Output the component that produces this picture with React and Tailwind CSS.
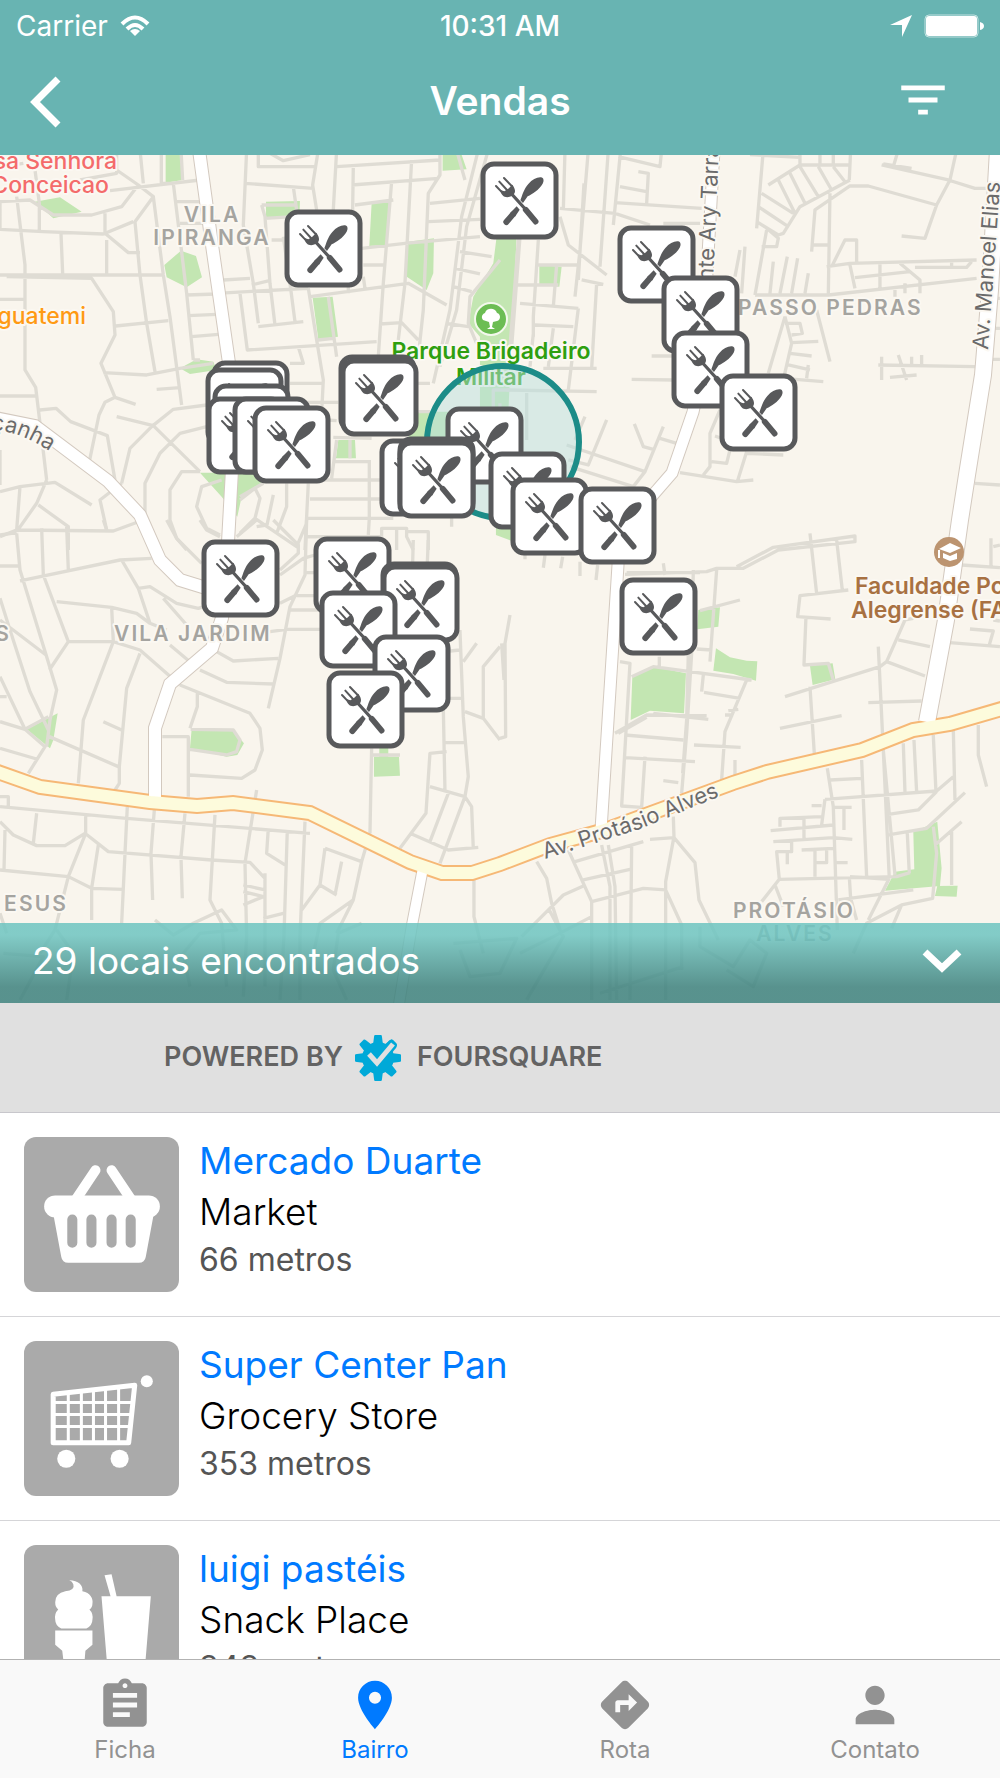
import { MdAssignment, MdDirections, MdFilterList, MdPerson, MdPlace } from 'react-icons/md';

// Map geometry. Every tile has its own grid, three units to one map unit.
const TILES = [
  {
    key: 'nw',
    transform: 'translate(0 150) scale(0.3333)',
    parks: [
      'M497,0H543L548,90L497,98Z',
      'M105,155L180,142L245,185L160,205Z',
      'M798,155L900,153L898,203H798Z',
      'M1115,160L1172,150L1162,285L1108,288Z',
      'M1225,275L1302,265L1300,370L1280,420L1217,378Z',
      'M493,345L543,302L588,318L606,382L560,412L500,382Z',
      'M938,443L998,440L1014,560L955,568Z',
      'M540,655L590,628L640,635L650,660L570,672Z',
      'M1328,0H1380L1400,58L1328,62Z',
      'M1490,260H1550L1532,640L1525,790H1440V560L1405,520L1420,440L1480,340Z',
      'M1255,785H1530L1500,870L1225,862Z',
      'M1015,870H1065L1068,925H1008Z',
      'M600,968H780L790,1000L725,1040L712,1100L665,1040Z',
      'M1488,1120L1550,1130L1540,1175L1488,1155Z',
    ],
    streets: [
      'M0,155L90,150L160,195L275,195L365,170L415,105M0,238L130,245L310,252L400,215',
      'M0,50L70,40M105,60L118,160V240M183,250L188,370M315,190V250L385,308H420M320,270V370',
      'M50,140L75,345V660L107,712L120,820L140,990M0,160V238',
      'M0,375H490M20,380L275,385L340,485L345,555L303,640L345,742L315,757L297,795L268,935',
      'M0,448H75M0,738H107M120,780L168,775L212,815L322,857L345,990',
      'M350,60L415,105L460,140L405,215L420,375L440,520L465,665M330,122L600,90',
      'M420,0L430,100M484,0V100H520M543,0L548,90M240,90L350,70V0',
      'M460,140L490,375L510,500L545,765M520,100L560,430L580,630M530,155H600M540,220H610',
      'M347,528L505,512M310,668L440,675L540,655L640,640M345,742L407,763',
      'M560,435L650,432M565,497L650,493M575,560L655,553M580,630H600M470,718L540,713',
      'M740,0L730,225L760,400L775,520M650,430L925,415M670,390L750,385M755,405L808,392',
      'M775,0V50H945M810,10L850,32L930,14M735,100L940,115',
      'M785,165L795,200L810,400L825,525M785,165H890M795,205L880,200M880,110L890,180M955,0L938,105L950,180',
      'M1010,0L1000,180M1060,50L1058,180M1010,50L1320,30M1055,105L1315,85M1065,165L1180,150',
      'M815,270H855M720,430L742,600L1130,575M775,530L910,515M850,260L870,400L885,515',
      'M925,415L950,570L970,690L965,790M985,440L1010,620M930,440L1225,400L1340,465',
      'M1175,95L1150,400L1135,620M1235,30L1215,400L1195,570M1320,0V75L1285,130L1270,480L1255,620',
      'M1140,522L1205,518L1255,570M895,590L910,640H870M955,570L1000,565M1090,380L1095,415M1045,410V430',
      'M1085,295L1215,280L1440,260M1090,345H1150',
      'M1290,160L1440,145M1285,215L1440,208M1380,305L1475,320M1365,355L1440,372M1360,410L1415,425M1340,520L1405,530',
      'M1435,0L1385,200L1350,480L1300,700M1465,0L1400,230L1370,480L1320,650M1370,0L1395,90M1500,330L1410,440L1405,520L1430,580',
      'M350,800L460,827L600,965M455,830L520,778L620,765M455,830L390,895L365,1000',
      'M620,830L540,850L480,910L435,1000V1110L470,1200M600,965L545,965L510,1020V1110L530,1165L560,1200',
      'M665,990L605,1010L590,1070L620,1135L660,1155M720,1050L765,1015L780,1045L765,1105L720,1150',
      'M820,1035L800,1130M860,1000V1070L830,1150M765,1105L890,1190L920,1120M720,1040L790,1000',
      'M925,1000L915,1200M925,990H1140M930,1047H1140M920,1105H1180M1108,930V1105L1105,1155',
      'M870,700H970M870,757H1015M980,810L1010,812M1000,862L1115,865M1000,935H1105M1010,870L995,985M1050,870V925',
      'M1145,1160V1135H1220V1160L1240,1200M1190,1135V1200M1220,1145H1285V1200M920,1160H1140M1355,1100V1130',
      'M0,1025L60,1010L165,997L275,1065M60,1010L50,1140M0,1160L50,1140L340,1143L430,1110',
      'M140,990L110,1060L50,1145M115,1065L205,1130V1200M365,1000L300,1050L320,1140M0,900V1005',
      'M1250,700H1290M1255,785H1290M1480,780V720H1530M1500,820V760',
    ],
  },
  {
    key: 'ne',
    transform: 'translate(500 150) scale(0.3333)',
    parks: ['M118,345L185,350L178,410L118,403Z'],
    streets: [
      'M790,0L770,235M750,14L900,22M900,0V45L805,105M960,0V50M1000,0V50M1052,0L1048,90M900,45H1050',
      'M870,70L915,160M900,50L955,140M955,50L995,120M1000,50L1035,95M835,90L885,190',
      'M1050,90L900,170L850,250L835,255L770,215M785,130L880,190M775,170L865,230',
      'M1145,45L1345,90L1425,115H1470M1180,50L1195,0M1370,0L1350,90L1310,165L1275,265L1205,258M1150,42L1235,55',
      'M1310,165L1105,108H1050L945,180L935,305M990,130L985,435M935,285H985M800,235L835,265L830,290H785M800,240L765,435',
      'M765,435H985L1430,385M980,350L1050,340L1430,330M1245,352H1400L1415,335M995,350L1035,270H1070V340',
      'M1050,345L1065,415M1065,383L1230,365M1140,340V415M1200,340L1260,390V430M1185,410V440M1215,400V430M1355,335V350',
      'M735,290L725,430M720,300L705,380M820,335L810,430M862,320L840,430M893,325L875,430M925,370L915,430',
      'M855,500L805,670M855,500L875,580L850,690M855,520H900L907,550L875,555M875,578L955,574M870,610L935,618',
      'M865,645L930,660M925,645L920,685M850,685L970,695M950,480L990,635',
      'M1145,620V690M1135,645L1425,650M1195,615L1220,690M1170,682L1250,675M1235,620V650M1265,615V645',
      'M1425,1000L1500,1005M1475,360L1500,362M1480,445H1500M1475,535H1500M1475,628H1500',
      'M195,0L190,180M265,0L240,300L225,440M325,0L300,350M362,0L340,225M355,20L480,50L485,0M415,65L445,70L440,160',
      'M360,110L440,125M345,158L605,175M180,175L345,190L450,225M490,220H600M180,200L205,285L320,375',
      'M115,270L100,500V560M115,345H235M50,405H175M60,460L235,475M105,525L220,530M170,345L160,470M245,390L310,403',
      'M290,400L275,655M100,550L90,650M235,475L205,720M160,535L145,650M130,655H290M20,720L290,725M80,725V870M455,618H520M395,688L520,690',
      'M255,800L225,870M320,810L265,945L205,930M200,885L435,965M210,950L400,1010L435,965L490,830M403,822L430,890L465,900M480,865L530,880',
      'M660,780L630,850V950L610,975M540,968L710,995L760,990M740,905L712,995M690,900L680,940L635,935M740,910L850,915M645,858L665,865',
      'M60,260L35,590M56,260L30,590M252,100L235,390',
    ],
  },
  {
    key: 'sw',
    transform: 'translate(0 520) scale(0.3333)',
    parks: [
      'M80,628L173,580L160,660L150,685Z',
      'M575,628L700,632L732,670L712,705L680,710L570,685Z',
      'M1138,680H1165V710H1197L1200,767L1122,770V710H1138Z',
    ],
    streets: [
      'M0,45L50,38M0,138H60M50,40L60,150L140,410L170,510L150,600L140,680M125,25L130,165L205,365M200,20L205,150',
      'M60,183L360,120L455,115M365,120L415,205L450,310M415,205L450,200L530,250L595,265L640,250M490,235L560,315M310,0L320,30',
      'M170,245L335,262L410,280L450,310L500,330M335,262L340,365L250,600L235,790M205,365H340L420,390L540,495M205,365L148,450',
      'M0,235L30,330L90,515L145,630M0,300L138,405M0,470L75,628L145,590M0,530H20M0,605L75,628L135,680L85,760M0,685L110,717',
      'M148,650L355,740M310,605L365,630M420,400L380,505L358,740V790L345,810',
      'M540,495L750,580L780,625L787,690L765,750L725,775L570,765M592,520V560L570,625M487,650H565V830',
      'M572,628L700,630L720,660L710,695L680,705L570,688',
      'M600,450L680,487L820,492M650,395L700,423L835,415M810,335L860,328H960M510,375L575,430M805,565L840,415L870,260L915,165L920,0',
      'M870,270H960M890,227H950M840,250L890,225M840,165L910,115L945,105M920,50H950M915,158H950M820,0L895,75V100L840,150',
      'M500,0L530,55L605,130M600,0L620,30L660,50M710,50L770,0M770,20L800,15',
      'M1115,685L1110,940M1115,705H1200M1240,60L1238,130M1285,60L1282,130',
      'M1380,330L1390,590L1405,770L1395,830L1415,860L1420,985M1330,560L1335,810M1340,695L1290,700L1278,880L1200,985',
      'M1290,800L1395,830L1320,1030M1345,820L1290,965M1230,940L1345,990L1435,982M1350,535H1390M1335,668H1395',
      'M1395,575L1450,595V440L1500,380M1450,595L1500,660M1390,425L1430,370M1350,393L1380,390',
      'M0,860L380,895L930,940M0,830H25V860M110,880L100,970M15,930L12,1050M0,905L40,945L110,977H195L255,940L325,995L635,1020L750,1027L795,1075',
      'M257,885V940L205,1070L165,1230L120,1300M0,1050L205,1070L275,1105L370,1108M295,975L275,1105V1200',
      'M382,860L375,1000L365,1210M463,870L453,1000L458,1140M555,880L543,1010L547,1135M645,885L630,1140L665,1210L680,1400',
      'M770,810L735,1030L740,1250L730,1430M805,925L800,1000L855,1035M862,930L852,1250L840,1440M915,905L900,1250V1440M795,1060V1400',
      'M730,1095L795,1110M730,1115L790,1130L730,1155M790,1195L850,1180M1110,940L1085,1025L1060,1140L960,1210L930,1350',
      'M975,985L1085,1025M975,985L960,1095L905,1170M960,1095L1010,1125M1025,1025L1005,1125M1422,1075V1190L1450,1300',
      'M1085,1210L1015,1240L1000,1350L1040,1440M1060,1140L1010,1240M0,1180L20,1240M170,1230L220,1300L200,1440M10,1300L130,1310L60,1440',
      'M465,1200L520,1245L580,1210L665,1170L710,1230L600,1240L550,1300L570,1400',
    ],
  },
  {
    key: 'se',
    transform: 'translate(500 520) scale(0.3333)',
    parks: [
      'M595,270L660,262L655,320L592,328Z',
      'M648,385L690,412L740,422L772,424L768,482L700,462L640,452Z',
      'M397,470L460,440L558,460L552,580L450,572L392,600Z',
      'M930,437L998,430L1006,478L938,495Z',
      'M1240,935L1312,905L1325,1045L1320,1098L1155,1112L1185,1055L1243,1048Z',
      'M1312,1098L1373,1097L1370,1130L1305,1128Z',
    ],
    streets: [
      'M375,163L620,155L650,145H730L835,90L1065,65V48L820,82L710,140M380,158H600M490,130L495,165M650,150L630,425',
      'M580,150L575,400L560,640L545,820M565,400L560,600L548,760M600,272L720,240M590,387L635,390',
      'M360,425L390,430L380,600L365,858L425,862L435,710M345,640L440,585L620,587M355,640L440,592M460,580L625,598',
      'M395,470L460,440L755,480M478,410V440M610,465L605,515M612,517L720,535M740,480L675,635L665,780',
      'M685,572L715,568M675,585H700M375,645L550,660M375,713L585,725M582,675L722,682M490,782L535,788M705,720V765',
      'M930,40L950,220M1010,60L1027,210M1045,210L900,227L893,290L992,297M918,290L912,435L985,430L1000,480',
      'M855,530L1140,440L1160,425L1215,300L1240,295M1135,380L1150,690L1168,1075M930,500L943,700M840,625L1025,587',
      'M1105,548L1265,543M1195,360L1290,380M1160,425L1275,468M1385,135L1500,143M1473,55V140M1480,80L1500,75',
      'M1340,367L1500,380M1410,327L1480,333L1468,375M1480,300L1500,303',
      'M75,100V118M135,105L130,143M188,110L182,145M240,125V168M293,135L288,180M30,285L15,370L17,650L0,655M5,370L12,480',
      'M1435,615V705L1460,800M1360,625L1365,840M1300,645L1308,815M1242,660L1250,815M1210,670L1215,815M1085,720L1100,1070',
      'M982,745L1000,860L1012,1230M990,780L1085,775M975,838L1310,813L1360,770M1165,883L1255,870L1310,815',
      'M1165,945L1280,925L1395,818M1150,690L1185,1065M1222,940L1228,1060M1305,975L1385,905M1355,935V1095',
      'M1300,920L1310,1000L1298,1135L1205,1155L1100,1210L1060,1300M1205,1155L1175,1225',
      'M935,857H965M1000,862H1055M1032,865V930M975,838L965,915M965,890L840,895V920M812,932L1000,915M912,895V955',
      'M820,965L1000,953L1057,958M875,962V995H830L838,1078L785,1145M862,1000V1033M905,990L1000,985M945,990V1070',
      'M980,985V1028H945M1005,1028H1043M838,1078L1190,1070L1230,1058M825,1095L850,1160M1048,1070L1052,1135M1015,1140L1240,1110',
      'M1168,1075L1105,1200M1052,1135L1070,1200M1050,1070L1165,1078',
      'M110,1025L140,1075L155,1150L185,1245M205,990L275,1145V1440M305,975L330,1100V1440M325,975L345,1100L350,1440',
      'M225,1025L430,965M395,980L390,1440M250,1080L390,1048M275,1145L430,1105L497,1110L545,1215V1350',
      'M520,890L522,950L497,1085V1440M450,958L522,953L585,1028L597,1140L655,1260M250,1098L190,1125L65,1250M275,1190L160,1250L60,1300M145,1165L190,1250L80,1440',
      'M300,1420L550,1340M-140,1270L50,1255L0,1360L-90,1370L-120,1290M600,1220V1280L700,1340L750,1260L800,1300L760,1400L680,1350',
    ],
  },
];

const ROADS = [
  { width: 12, d: 'M199,150L212,245L230,370L232,470L227,560L222,618L212,648L170,684L155,728V800' },
  { width: 12, d: 'M-5,418L35,426L108,481L140,515L160,560L180,580L206,588' },
  { width: 11, d: 'M714,150L706,290L700,380L693,412L672,473L652,496L618,540V565L601,830' },
  { width: 16, d: 'M998,150L990,290L983,375L967,475L960,520L946,620L927,722' },
  { width: 10, d: 'M423,868L412,925L398,1010' },
];

const AVENUE =
  'M-5,771L40,787L150,802L197,806L233,803L310,813L410,862L442,873H472L500,864L550,845L605,830L733,783L767,772L862,750L913,730L950,724L1005,708';

const LABELS = [
  { text: 'sa Senhora', x: 117, y: 169, anchor: 'end', style: 'fill-[#f46b6b] font-medium text-[23px]' },
  { text: 'Conceicao', x: 109, y: 193, anchor: 'end', style: 'fill-[#f46b6b] font-medium text-[23px]' },
  { text: 'guatemi', x: 86, y: 324, anchor: 'end', style: 'fill-[#ff9a14] font-medium text-[23px]' },
  { text: 'VILA', x: 212, y: 222, anchor: 'middle', style: 'fill-[#a5a4a0] font-semibold text-[21px] tracking-widest' },
  { text: 'IPIRANGA', x: 212, y: 245, anchor: 'middle', style: 'fill-[#a5a4a0] font-semibold text-[21px] tracking-widest' },
  { text: 'PASSO PEDRAS', x: 738, y: 315, anchor: 'start', style: 'fill-[#a5a4a0] font-semibold text-[21px] tracking-widest' },
  { text: 'VILA JARDIM', x: 114, y: 641, anchor: 'start', style: 'fill-[#a5a4a0] font-semibold text-[21px] tracking-widest' },
  { text: 'S', x: 11, y: 641, anchor: 'end', style: 'fill-[#a5a4a0] font-semibold text-[21px] tracking-widest' },
  { text: 'ESUS', x: 68, y: 911, anchor: 'end', style: 'fill-[#a5a4a0] font-semibold text-[21px] tracking-widest' },
  { text: 'PROTÁSIO', x: 794, y: 918, anchor: 'middle', style: 'fill-[#a5a4a0] font-semibold text-[21px] tracking-widest' },
  { text: 'ALVES', x: 795, y: 941, anchor: 'middle', style: 'fill-[#a5a4a0] font-semibold text-[21px] tracking-widest' },
  { text: 'Parque Brigadeiro', x: 491, y: 359, anchor: 'middle', style: 'fill-[#2f9f10] font-semibold text-[23px]' },
  { text: 'Militar', x: 491, y: 385, anchor: 'middle', style: 'fill-[#2f9f10] font-semibold text-[23px]' },
  { text: 'Faculdade Po', x: 855, y: 594, anchor: 'start', style: 'fill-[#a87142] font-semibold text-[23px]' },
  { text: 'Alegrense (FA', x: 851, y: 618, anchor: 'start', style: 'fill-[#a87142] font-semibold text-[23px]' },
];

const STREET_LABELS = [
  { id: 'protasio', text: 'Av. Protásio Alves', d: 'M545,859L640,829L740,788' },
  { id: 'manoel', text: 'Av. Manoel Elias', d: 'M988,350L1004,130' },
  { id: 'tarrago', text: 'nte Ary Tarra', d: 'M713,281L721,100' },
  { id: 'canha', text: 'çanha', d: 'M-9,430Q25,430 70,466' },
];

// Top left corner of each venue pin, drawn from back to front
const PINS = [
  [481, 162], [285, 210], [618, 226], [662, 276], [672, 331], [720, 374],
  [212, 361], [206, 368], [213, 384], [207, 397], [233, 397], [253, 406],
  [339, 355], [341, 359], [446, 407], [380, 439], [398, 437], [398, 441],
  [489, 452], [511, 478], [579, 487], [314, 537], [202, 540], [381, 562],
  [382, 565], [620, 578], [320, 591], [373, 635], [327, 671],
];

const VENUES = [
  { name: 'Mercado Duarte', category: 'Market', distance: '66 metros', Icon: BasketIcon },
  { name: 'Super Center Pan', category: 'Grocery Store', distance: '353 metros', Icon: CartIcon },
  { name: 'luigi pastéis', category: 'Snack Place', distance: '343 metros', Icon: SnackIcon },
];

const TABS = [
  { key: 'ficha', label: 'Ficha', Icon: MdAssignment, active: false },
  { key: 'bairro', label: 'Bairro', Icon: MdPlace, active: true },
  { key: 'rota', label: 'Rota', Icon: MdDirections, active: false },
  { key: 'contato', label: 'Contato', Icon: MdPerson, active: false },
];

function BasketIcon() {
  return (
    <svg viewBox="0 0 154 154" className="w-full" fill="none" stroke="#fff" strokeLinecap="round">
      <path d="M71 33L51 63M87 33L107 63" strokeWidth="10" />
      <rect x="20" y="58" width="115" height="22" rx="11" fill="#fff" stroke="none" />
      <path d="M29 76h100l-8 43q-1 6-7 6H44q-6 0-7-6z" fill="#fff" stroke="none" />
      <path d="M48 82v23M67 82v23M87 82v23M106 82v23" stroke="#aaa" strokeWidth="10" />
    </svg>
  );
}

function CartIcon() {
  return (
    <svg viewBox="0 0 154 154" className="w-full" fill="none" stroke="#fff" strokeLinejoin="round">
      <path d="M29 53L110 44L104 101H29Z" strokeWidth="5" />
      <path d="M44 51v50M57 50v51M69 48v53M81 47v54M94 46v55M29 61h79M29 73h78M29 85h77" strokeWidth="3" />
      <g fill="#fff" stroke="none">
        <circle cx="122" cy="40" r="6" />
        <circle cx="42" cy="117" r="9" />
        <circle cx="95" cy="117" r="9" />
      </g>
    </svg>
  );
}

function SnackIcon() {
  return (
    <svg viewBox="0 0 154 154" className="w-full" fill="#fff">
      <path d="M45 35C54 35 59 40 58 46C66 47 69 54 68 58Q68 62 65 64Q69 68 68 74Q68 80 62 83H37Q31 80 31 74Q30 68 34 64Q31 62 31 57Q31 48 41 46Q51 45 49 39Q48 36 45 35Z" />
      <path d="M31 85H68V99L61 105L59 130H41L38 105L31 99Z" />
      <path d="M80 30L87 29L92 51H126L119 136H84L77 51H86Z" />
    </svg>
  );
}

const Pin = ({ x, y }) => (
  <g transform={`translate(${x} ${y})`}>
    <rect x="2" y="2" width="73" height="73" rx="11" fill="#fff" stroke="#58595b" strokeWidth="5" />
    <g transform="scale(0.3333)" fill="#58595b" stroke="#58595b" strokeLinecap="round">
      <path d="M45 72L66 94M55 59L78 84M69 48L92 72" fill="none" strokeWidth="6" />
      <path d="M58 84C60 104 76 110 92 102C104 96 106 84 94 68L82 80L70 88Z" stroke="none" />
      <path d="M92 96L130 138" fill="none" strokeWidth="10" />
      <path d="M134 143L164 179" fill="none" strokeWidth="17" />
      <path d="M180 46C188 47 190 56 185 65C174 84 154 96 140 103L126 123L118 115C124 100 128 82 142 66C154 52 168 45 180 46Z" stroke="none" />
      <path d="M76 180L95 158" fill="none" strokeWidth="18" />
      <path d="M88 152L107 133L116 143L102 164Z" stroke="none" />
    </g>
  </g>
);

const VenueMap = () => (
  <svg viewBox="0 155 1000 848" className="block w-full" role="img" aria-label="Mapa do bairro">
    <rect y="155" width="1000" height="848" fill="#f9f5ed" />
    {TILES.map(({ key, transform, parks }) => (
      <path key={key} transform={transform} d={parks.join('')} fill="#c3e6b2" />
    ))}
    {TILES.map(({ key, transform, streets }) => (
      <path key={key} transform={transform} d={streets.join('')} fill="none" stroke="#dfdcd4" strokeWidth="10" strokeLinejoin="round" />
    ))}
    <g fill="none">
      {ROADS.map(({ d, width }) => (
        <path key={d} d={d} stroke="#d3c9bf" strokeWidth={width + 2} />
      ))}
      <path d={AVENUE} stroke="#f6b876" strokeWidth="16" />
      {ROADS.map(({ d, width }) => (
        <path key={d} d={d} stroke="#fff" strokeWidth={width} />
      ))}
      <path d={AVENUE} stroke="#fdfbdc" strokeWidth="12" />
    </g>

    <g stroke="#fbf8f2" strokeWidth="4" strokeLinejoin="round" className="[paint-order:stroke]">
      {LABELS.map(({ text, x, y, anchor, style }) => (
        <text key={text} x={x} y={y} textAnchor={anchor} className={style}>{text}</text>
      ))}
      {STREET_LABELS.map(({ id, text, d }) => (
        <g key={id}>
          <path id={id} d={d} fill="none" stroke="none" />
          <text className="fill-[#6b6b6b] text-[22px]">
            <textPath href={`#${id}`}>{text}</textPath>
          </text>
        </g>
      ))}
    </g>

    <g transform="translate(491 319)">
      <circle r="16" fill="#6cbd54" stroke="#f3f8ec" strokeWidth="2" />
      <path d="M-8 1C-11-3-7-6-6-6C-5-11 4-12 6-6C10-5 10 1 6 2L2 3L1 8L4 10H-4L-1 8L-2 3Z" fill="#fff" />
    </g>
    <g transform="translate(949 552)">
      <circle r="15" fill="#bc9470" />
      <path d="M-10-3L1-9L12-4L1 1ZM-6 1L1 4L8 1V7L1 9L-6 6ZM-11-2H-9V6H-11Z" fill="#fff" />
    </g>

    <circle cx="503" cy="442" r="76" fill="#b9e0de" fillOpacity="0.5" stroke="#1c8c88" strokeWidth="6" />
    {PINS.map(([x, y]) => (
      <Pin key={`${x}-${y}`} x={x} y={y} />
    ))}
  </svg>
);

const FoursquareLogo = () => (
  <svg viewBox="-23 -23 46 46" className="h-[46px] w-[46px]">
    <g fill="#00a9d8">
      <circle r="16" />
      {[0, 45, 90, 135, 180, 225, 270, 315].map((angle) => (
        <path key={angle} transform={`rotate(${angle})`} d="M-5-13L-4-21Q-4-23-3-23H3Q4-23 4-21L5-13Z" />
      ))}
      <path d="M9-15Q12-20 15-18L18-15Q20-13 18-10L8 2Z" />
    </g>
    <path d="M-9-4L-1 5L15-14" fill="none" stroke="#e0e0e0" strokeWidth="5" />
  </svg>
);

const StatusBar = () => (
  <div className="grid h-[52px] grid-cols-3 items-center px-4 text-[28px]">
    <div className="flex items-center gap-3">
      <span>Carrier</span>
      <svg viewBox="0 0 30 22" className="w-[30px]" fill="none" stroke="#fff" strokeWidth="4">
        <path d="M2 9Q15-4 28 9M7 14Q15 6 23 14" />
        <path d="M15 21L10 16Q15 12 20 16Z" fill="#fff" stroke="none" />
      </svg>
    </div>
    <span className="text-center font-medium">10:31 AM</span>
    <div className="flex items-center justify-end gap-3">
      <svg viewBox="0 0 22 22" className="w-[22px]" fill="#fff">
        <path d="M22 0L12 22V10H0Z" />
      </svg>
      <svg viewBox="0 0 60 24" className="w-[60px]" fill="#fff">
        <rect x="1" y="1" width="53" height="22" rx="4" fill="none" stroke="#fff" strokeOpacity="0.6" />
        <rect x="2" y="2" width="51" height="20" rx="3" />
        <path d="M56 8Q60 9 60 12T56 16Z" />
      </svg>
    </div>
  </div>
);

const App = () => (
  <div className="flex h-screen flex-col overflow-hidden bg-white font-[Inter,sans-serif]">
    <header className="shrink-0 bg-[#68b4b2] text-white">
      <StatusBar />
      <nav className="grid h-[103px] grid-cols-3 items-center px-7 pb-1">
        <button type="button" aria-label="Voltar" className="justify-self-start">
          <svg viewBox="0 0 36 54" className="w-9" fill="none" stroke="#fff" strokeWidth="7">
            <path d="M30 4L7 27L30 50" />
          </svg>
        </button>
        <h1 className="text-center text-[39px] font-semibold">Vendas</h1>
        <button type="button" aria-label="Filtrar" className="justify-self-end px-5 pb-1">
          <MdFilterList className="h-[58px] w-[58px]" />
        </button>
      </nav>
    </header>

    <section className="relative shrink-0">
      <VenueMap />
      <button
        type="button"
        className="absolute inset-x-0 bottom-0 flex h-20 items-center justify-between bg-linear-to-b from-[rgba(111,197,193,0.86)] from-15% to-[rgba(62,130,126,0.86)] to-80% pr-[34px] pb-1 pl-8 text-[37px] text-white"
      >
        29 locais encontrados
        <svg viewBox="0 0 48 36" className="w-12" fill="none" stroke="#fff" strokeWidth="7">
          <path d="M7 9L24 25L41 9" />
        </svg>
      </button>
    </section>

    <div className="flex h-[110px] shrink-0 items-center gap-3 border-b border-[#c8c7cc] bg-[#e0e0e0] px-[164px] text-[27px] font-semibold text-[#636363]">
      <span>POWERED BY</span>
      <FoursquareLogo />
      <span className="pl-1">FOURSQUARE</span>
    </div>

    <ul className="min-h-0 flex-1 overflow-hidden">
      {VENUES.map(({ name, category, distance, Icon }) => (
        <li key={name} className="flex gap-5 border-b border-[#d5d5d8] p-6">
          <div className="h-[155px] w-[155px] shrink-0 rounded-xl bg-[#aaa]">
            <Icon />
          </div>
          <div>
            <a href="#venue" className="block text-[37px] leading-[48px] text-[#007aff]">{name}</a>
            <p className="text-[37px] leading-[54px] font-light text-black">{category}</p>
            <p className="text-[32px] leading-[42px] text-[#555]">{distance}</p>
          </div>
        </li>
      ))}
    </ul>

    <nav className="grid h-[119px] shrink-0 grid-cols-4 border-t border-[#b2b2b2] bg-[#f9f9f9]">
      {TABS.map(({ key, label, Icon, active }) => (
        <button
          key={key}
          type="button"
          className={`flex flex-col items-center pt-4 ${active ? 'text-[#007aff]' : 'text-[#929292]'}`}
        >
          <Icon className="h-[58px] w-[58px]" />
          <span className="text-[24px] leading-8">{label}</span>
        </button>
      ))}
    </nav>
  </div>
);

export default App;
